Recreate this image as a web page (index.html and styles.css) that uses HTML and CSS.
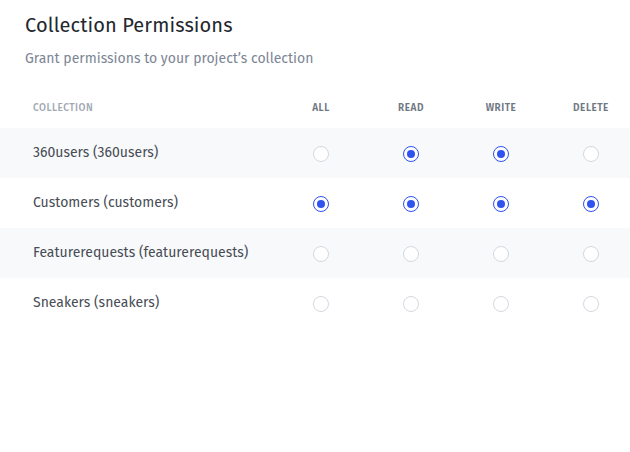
FILE: index.html
```html
<!DOCTYPE html>
<html>
<head>
<meta charset="utf-8">
<link rel="stylesheet" href="styles.css">
</head>
<body>
<div class="page">
  <header class="intro">
    <h1 class="title">Collection Permissions</h1>
    <p class="subtitle">Grant permissions to your project’s collection</p>
  </header>
  <div class="table">
    <div class="row head">
      <div class="name">COLLECTION</div>
      <div class="cell">ALL</div>
      <div class="cell">READ</div>
      <div class="cell">WRITE</div>
      <div class="cell">DELETE</div>
    </div>
    <div class="row shaded">
      <div class="name">360users (360users)</div>
      <div class="cell"><span class="radio"></span></div>
      <div class="cell"><span class="radio on"></span></div>
      <div class="cell"><span class="radio on"></span></div>
      <div class="cell"><span class="radio"></span></div>
    </div>
    <div class="row">
      <div class="name">Customers (customers)</div>
      <div class="cell"><span class="radio on"></span></div>
      <div class="cell"><span class="radio on"></span></div>
      <div class="cell"><span class="radio on"></span></div>
      <div class="cell"><span class="radio on"></span></div>
    </div>
    <div class="row shaded">
      <div class="name">Featurerequests (featurerequests)</div>
      <div class="cell"><span class="radio"></span></div>
      <div class="cell"><span class="radio"></span></div>
      <div class="cell"><span class="radio"></span></div>
      <div class="cell"><span class="radio"></span></div>
    </div>
    <div class="row">
      <div class="name">Sneakers (sneakers)</div>
      <div class="cell"><span class="radio"></span></div>
      <div class="cell"><span class="radio"></span></div>
      <div class="cell"><span class="radio"></span></div>
      <div class="cell"><span class="radio"></span></div>
    </div>
  </div>
</div>
</body>
</html>
```
FILE: styles.css
```css
html, body {
  margin: 0;
  padding: 0;
  background: #fff;
  overflow: hidden;
}
body {
  font-family: "Fira Sans", "Open Sans", "Noto Sans", sans-serif;
  color: #333a45;
}
.page {
  width: 636px;
}
.intro {
  padding: 12px 25px 0 25px;
}
.title {
  margin: 0;
  font-size: 20px;
  font-weight: 400;
  line-height: 26px;
  color: #23272e;
  letter-spacing: 0.1px;
}
.subtitle {
  margin: 12px 0 0 0;
  font-size: 14px;
  line-height: 18px;
  color: #7c8595;
}
.table {
  margin-top: 20px;
}
.row {
  display: grid;
  grid-template-columns: 1fr 90px 90px 90px 90px;
  align-items: center;
  height: 50px;
}
.row.head {
  height: 40px;
}
.row.shaded {
  background: #f8f9fb;
}
.name {
  padding-left: 33px;
  padding-bottom: 1px;
  font-size: 14px;
  color: #474c55;
}
.head .name {
  font-size: 10px;
  font-weight: 500;
  color: #a0a7b3;
  padding-bottom: 0;
  letter-spacing: 0.5px;
}
.head .cell {
  font-size: 10px;
  font-weight: 600;
  color: #6f7784;
  padding-top: 0;
  letter-spacing: 0.5px;
}
.cell {
  display: flex;
  justify-content: center;
  align-items: center;
  padding-top: 2px;
}
.radio {
  box-sizing: border-box;
  width: 16px;
  height: 16px;
  border-radius: 50%;
  border: 1px solid #d4d8df;
  background: #fff;
  display: flex;
  align-items: center;
  justify-content: center;
}
.radio.on {
  border-color: #3052ee;
}
.radio.on::after {
  content: "";
  width: 8px;
  height: 8px;
  border-radius: 50%;
  background: #3052ee;
}
```
